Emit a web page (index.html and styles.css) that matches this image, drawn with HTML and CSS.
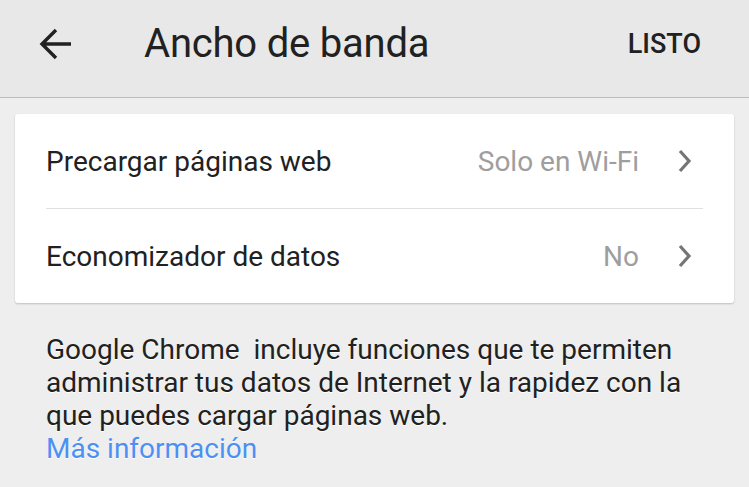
FILE: index.html
```html
<!DOCTYPE html>
<html lang="es">
<head>
<meta charset="utf-8">
<link rel="stylesheet" href="styles.css">
</head>
<body>
<header class="toolbar">
  <svg class="back" width="34" height="34" viewBox="0 0 34 34" aria-hidden="true">
    <path d="M33 17H5M18 3L4 17l14 14" fill="none" stroke="#212121" stroke-width="3.4"/>
  </svg>
  <h1 class="title">Ancho de banda</h1>
  <span class="done">LISTO</span>
</header>
<main class="content">
  <section class="card">
    <div class="row">
      <span class="label">Precargar páginas web</span>
      <span class="value">Solo en Wi-Fi</span>
      <svg class="chev" width="14" height="24" viewBox="0 0 14 24" aria-hidden="true"><path d="M2 2l9 10-9 10" fill="none" stroke="#757575" stroke-width="3.2"/></svg>
    </div>
    <div class="divider"></div>
    <div class="row">
      <span class="label">Economizador de datos</span>
      <span class="value">No</span>
      <svg class="chev" width="14" height="24" viewBox="0 0 14 24" aria-hidden="true"><path d="M2 2l9 10-9 10" fill="none" stroke="#757575" stroke-width="3.2"/></svg>
    </div>
  </section>
  <p class="info">Google Chrome&nbsp; incluye funciones que te permiten administrar tus datos de Internet y la rapidez con la que puedes cargar páginas web.<br><a class="more" href="#">Más información</a></p>
</main>
</body>
</html>
```
FILE: styles.css
```css
* { box-sizing: border-box; }
html, body { margin: 0; padding: 0; }
body {
  background: #eeeeee;
  font-family: Roboto, "Noto Sans", sans-serif;
  color: #212121;
  width: 749px;
  height: 487px;
  overflow: hidden;
}
.toolbar {
  height: 98px;
  background: #e8e8e8;
  border-bottom: 1px solid #bdbdbd;
  display: flex;
  align-items: center;
  padding: 0 48px 0 38px;
}
.back { flex: none; margin-top: -10px; }
.title {
  margin: 0 0 0 72px;
  font-size: 40px;
  font-weight: 400;
  flex: 1;
  margin-top: -10px;
  letter-spacing: -0.2px;
}
.done {
  font-size: 27px;
  font-weight: 500;
  margin-top: -10px;
}
.content { padding: 16px 15px 0 15px; }
.card {
  background: #fff;
  border-radius: 3px;
  box-shadow: 0 1px 2px rgba(0,0,0,0.2);
  padding: 0 31px;
}
.row {
  height: 94px;
  display: flex;
  align-items: center;
  font-size: 28px;
}
.label { flex: 1; }
.value { color: #9e9e9e; margin-right: 39px; }
.chev { flex: none; margin-right: 11px; }
.divider { height: 1px; background: #e0e0e0; }
.info {
  margin: 30px 31px 0 31px;
  font-size: 28px;
  line-height: 33px;
  text-shadow: 0 1px 0 #fff;
}
.more { color: #4d90f4; text-decoration: none; }
```
